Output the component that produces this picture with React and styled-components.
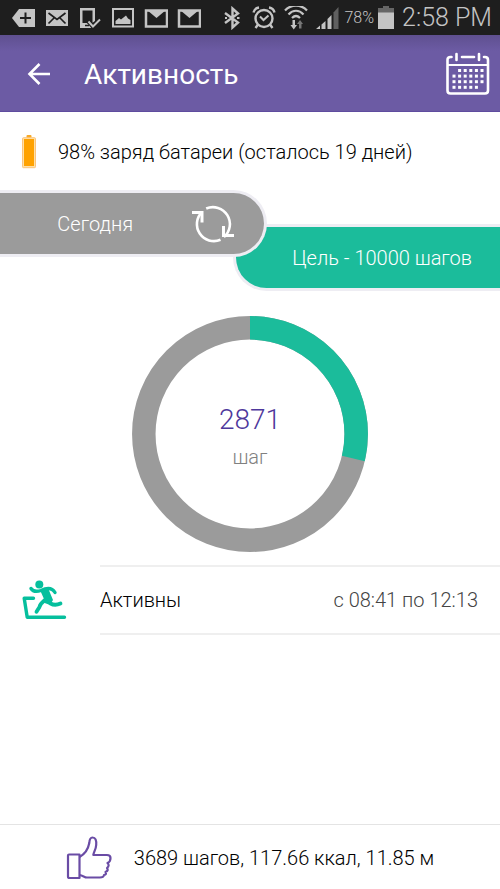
import React from "react";
import styled, { createGlobalStyle } from "styled-components";

const color = {
  purple: "#6c5ba4",
  deepPurple: "#5e4b9e",
  green: "#1bbc9b",
  gray: "#9b9b9b",
  edge: "#eeedf3",
  line: "#efefef",
};

const GlobalStyle = createGlobalStyle`
  *, *::before, *::after { box-sizing: border-box; }
  body {
    margin: 0;
    background: #fff;
    font-family: Roboto, "Liberation Sans", sans-serif;
    color: #111;
  }
`;

const Screen = styled.div`
  min-height: 100vh;
  display: flex;
  flex-direction: column;
  overflow-x: hidden;
`;

const StatusBar = styled.div`
  height: 35px;
  padding: 0 8px 0 12px;
  display: flex;
  align-items: center;
  justify-content: space-between;
  background: #1e1e1e;
  color: #c4c4c4;
`;

const StatusGroup = styled.div`
  display: flex;
  align-items: center;
  gap: ${(p) => p.$gap}px;
`;

const StatusIcon = styled.svg`
  display: block;
  flex: none;
  width: ${(p) => p.$width || 24}px;
  height: 24px;
`;

const Percent = styled.span`
  font-size: 16px;
  font-weight: 300;
  line-height: 24px;
`;

const Power = styled.div`
  display: flex;
  align-items: center;
  gap: 4px;
  margin-left: -4px;
`;

const Clock = styled.time`
  font-size: 25px;
  font-weight: 300;
  line-height: 32px;
`;

const AppBar = styled.header`
  min-height: 77px;
  padding: 2px 10px 0 24px;
  display: flex;
  align-items: center;
  background: linear-gradient(#5f5090, ${color.purple} 16px);
  border-bottom: 1px solid #5f4c9f;
  color: #fff;
`;

const Title = styled.h1`
  flex: 1;
  margin: 0 0 0 30px;
  padding-top: 2px;
  font-size: 28px;
  font-weight: 400;
  line-height: 36px;
`;

const IconButton = styled.button`
  display: block;
  padding: 0;
  border: 0;
  background: none;
  color: inherit;
  cursor: pointer;
  svg { display: block; }
`;

const BatteryLine = styled.div`
  min-height: 78px;
  padding: 2px 22px 0 21px;
  display: flex;
  align-items: center;
  gap: 21px;
  font-size: 20px;
  font-weight: 300;
  line-height: 24px;
  color: #000;
  svg { flex: none; }
`;

const Pills = styled.section`
  display: flex;
  flex-direction: column;
`;

const Pill = styled.div`
  width: calc(50% + 17px);
  min-height: 67px;
  display: flex;
  align-items: center;
  justify-content: flex-end;
  border: 3px solid ${color.edge};
  font-size: 20px;
  font-weight: 300;
  line-height: 24px;
  color: #fff;
`;

const TodayPill = styled(Pill)`
  z-index: 1;
  padding-right: 29px;
  gap: 58px;
  border-left: 0;
  border-radius: 0 34px 34px 0;
  background: ${color.gray};
`;

const GoalPill = styled(Pill)`
  align-self: flex-end;
  margin-top: -33px;
  padding-right: 28px;
  border-right: 0;
  border-radius: 34px 0 0 34px;
  background: ${color.green};
`;

const Gauge = styled.section`
  display: grid;
  place-items: center;
  margin-top: 25px;
  > * { grid-area: 1 / 1; }
`;

const Reading = styled.div`
  display: flex;
  flex-direction: column;
  align-items: center;
  gap: 9px;
  padding-top: 4px;
`;

const Steps = styled.strong`
  font-size: 28px;
  font-weight: 300;
  line-height: 32px;
  color: #4e389c;
`;

const Unit = styled.span`
  font-size: 20px;
  font-weight: 300;
  line-height: 24px;
  color: #808080;
`;

const ActivityRow = styled.section`
  display: grid;
  grid-template-columns: 100px 1fr;
  margin-top: 13px;
  font-size: 20px;
  font-weight: 300;
  line-height: 24px;
`;

const RowIcon = styled.div`
  display: flex;
  align-items: center;
  padding-left: 22px;
`;

const RowText = styled.div`
  min-height: 70px;
  padding-right: 22px;
  display: flex;
  align-items: center;
  justify-content: space-between;
  border: solid ${color.line};
  border-width: 2px 0;
  color: #000;
`;

const Period = styled.span`
  color: #444;
`;

const Summary = styled.footer`
  min-height: 65px;
  margin-top: auto;
  padding-top: 2px;
  display: flex;
  align-items: center;
  justify-content: center;
  gap: 22px;
  border-top: 1px solid #e4e4e4;
  font-size: 20px;
  font-weight: 300;
  line-height: 24px;
  color: #000;
  svg { flex: none; }
`;

function TagIcon() {
  return (
    <StatusIcon viewBox="0 0 24 24" aria-hidden="true">
      <path d="M7 3H23V21H7L0 12Z" fill="#c4c4c4" />
      <path d="M8 12H19M13.5 6.500V17.500" stroke="#1e1e1e" strokeWidth="2" />
    </StatusIcon>
  );
}

function EnvelopeIcon() {
  return (
    <StatusIcon viewBox="0 0 24 24" aria-hidden="true">
      <path d="M1 4H23V20H1Z" fill="#c4c4c4" />
      <path d="M3.500 7L12 13.500L20.500 7M3.500 17.500L9 12M20.500 17.500L15 12" fill="none" stroke="#1e1e1e" strokeWidth="1.700" />
    </StatusIcon>
  );
}

function PhoneCheckIcon() {
  return (
    <StatusIcon viewBox="0 0 24 24" aria-hidden="true">
      <path fillRule="evenodd" d="M2 2H17V15L13 18L16 22H2ZM4.500 4.500V17H14.500V4.500Z" fill="#c4c4c4" />
      <path d="M7 19.500H11" stroke="#1e1e1e" strokeWidth="1.500" />
      <path d="M10.500 15.500L15 20.500L22 13.500" fill="none" stroke="#1e1e1e" strokeWidth="4.500" />
      <path d="M10.500 15.500L15 20.500L22 13.500" fill="none" stroke="#c4c4c4" strokeWidth="2" />
    </StatusIcon>
  );
}

function PictureIcon() {
  return (
    <StatusIcon viewBox="0 0 24 24" aria-hidden="true">
      <path d="M2 3H22V20.500H2Z" fill="none" stroke="#c4c4c4" strokeWidth="2" />
      <path d="M4.500 18V15L8 12L10 13.500L15 9.500L17 12.500L19.500 14V18Z" fill="#c4c4c4" />
    </StatusIcon>
  );
}

function GmailIcon() {
  return (
    <StatusIcon viewBox="0 0 24 24" aria-hidden="true">
      <path d="M2 4.500H23V20.500H2Z" fill="none" stroke="#c4c4c4" strokeWidth="2.500" />
      <path d="M3 4H22L12.500 12Z" fill="#c4c4c4" />
    </StatusIcon>
  );
}

function BluetoothIcon() {
  return (
    <StatusIcon viewBox="0 0 24 24" aria-hidden="true">
      <path d="M5 7L18 16.500L12.500 21.500V2.500L18 7.500L5 17" fill="none" stroke="#c4c4c4" strokeWidth="2.400" />
      <path d="M5 12H7M17 12H19.500" stroke="#c4c4c4" strokeWidth="2" />
    </StatusIcon>
  );
}

function AlarmIcon() {
  return (
    <StatusIcon viewBox="0 0 24 24" aria-hidden="true">
      <g fill="none" stroke="#c4c4c4">
        <circle cx="12" cy="12.500" r="8.500" strokeWidth="2.400" />
        <path d="M8 10.500L11.500 14L16.500 9.500" strokeWidth="2" />
        <path d="M1.500 6.500C2 4 4 2 7 1.500M22.500 6.500C22 4 20 2 17 1.500" strokeWidth="2.400" />
        <path d="M6 18.500L3.500 22M18 18.500L20.500 22" strokeWidth="2.400" />
      </g>
    </StatusIcon>
  );
}

function WifiIcon() {
  return (
    <StatusIcon viewBox="0 0 24 24" aria-hidden="true">
      <g fill="none" stroke="#c4c4c4" strokeWidth="2.200">
        <path d="M1 4.500C7 -2 17 -2 23 4.500" />
        <path d="M4.500 8.500C9 3.500 15 3.500 19.500 8.500" />
        <path d="M8 12C10.500 9.500 13.500 9.500 16 12" />
      </g>
      <path d="M8.500 14H11V19H13L9.750 23.500L6.500 19H8.500Z" fill="#c4c4c4" />
      <path d="M15 22.500H17.500V18H19L16 14L13 18H15Z" fill="#777" />
    </StatusIcon>
  );
}

function SignalIcon() {
  return (
    <StatusIcon viewBox="0 0 24 24" aria-hidden="true">
      <path d="M0 23L4 19.500V23ZM5.500 18.500L9.500 15V23H5.500ZM11.500 13L15.500 9V23H11.500Z" fill="#c4c4c4" />
      <path d="M17.500 6.500L22.500 1V23H17.500Z" fill="#606060" />
    </StatusIcon>
  );
}

function PhoneBatteryIcon() {
  return (
    <StatusIcon $width={16} viewBox="0 0 16 24" aria-hidden="true">
      <path d="M5 0H11V2H16V8H0V2H5Z" fill="#666" />
      <path d="M0 6.500H16V23H0Z" fill="#c4c4c4" />
    </StatusIcon>
  );
}

function BackArrow() {
  return (
    <svg width="30" height="30" viewBox="0 0 30 30" aria-hidden="true">
      <path d="M26 15H6M15.500 5L5.500 15L15.500 25" fill="none" stroke="#fff" strokeWidth="2.600" />
    </svg>
  );
}

const calendarDots = [
  [1, 2, 3, 4, 5],
  [0, 1, 2, 3, 4, 5],
  [0, 1, 2, 3, 4, 5],
  [0, 1, 2, 3, 4],
];

function CalendarIcon() {
  return (
    <svg width="44" height="44" viewBox="0 0 44 44" aria-hidden="true">
      <g fill="none" stroke="#fff" strokeLinecap="round">
        <path d="M5.500 5H4.500Q1.500 5 1.500 8V38.500Q1.500 41.500 4.500 41.500H39Q42 41.500 42 38.500V8Q42 5 39 5H38" strokeWidth="2.600" />
        <path d="M16 5H28" strokeWidth="2.600" />
        <path d="M2 13H42" strokeWidth="2.200" />
        <path d="M10.500 2V8M33 2V8" strokeWidth="2.600" />
      </g>
      <g fill="#fff">
        {calendarDots.map((cells, row) =>
          cells.map((cell) => (
            <rect key={`${row}-${cell}`} x={6.5 + cell * 5.6} y={17 + row * 5.6} width="3" height="3" />
          ))
        )}
      </g>
    </svg>
  );
}

function ChargeIcon() {
  return (
    <svg width="16" height="34" viewBox="0 0 16 34" aria-hidden="true">
      <rect x="5.500" y="0" width="5" height="3" rx="1" fill="#f7a928" />
      <rect x="1.500" y="2.700" width="13" height="30" rx="1" fill="#ffe0a8" stroke="#fbc47c" />
      <rect x="3" y="4" width="10" height="27" fill="#ffa200" />
    </svg>
  );
}

function SyncIcon() {
  return (
    <svg width="44" height="40" viewBox="0 0 44 40" aria-hidden="true">
      <g fill="none" stroke="#fff" strokeWidth="2.600">
        <path d="M15.200 4.500A17 17 0 0 1 33 33" />
        <path d="M29.500 35.800A17 17 0 0 1 11 8" />
        <path d="M1 8.500H11V18.500" strokeWidth="3" />
        <path d="M32.500 22V31.500H43" strokeWidth="3" />
      </g>
    </svg>
  );
}

function Ring({ value, goal }) {
  const share = (value / goal) * 100;
  return (
    <svg width="236" height="236" viewBox="0 0 236 236" role="img" aria-label={`${value} / ${goal}`}>
      <g fill="none" strokeWidth="23.500" transform="rotate(-90 118 118)">
        <circle cx="118" cy="118" r="106.200" stroke={color.gray} />
        <circle cx="118" cy="118" r="106.200" stroke={color.green} pathLength="100" strokeDasharray={`${share} 100`} />
      </g>
    </svg>
  );
}

function RunnerIcon() {
  return (
    <svg width="46" height="40" viewBox="0 0 46 40" aria-hidden="true">
      <circle cx="17.300" cy="4.500" r="4" fill="#06bf9d" />
      <g fill="none" stroke="#06bf9d" strokeWidth="3.400" strokeLinecap="round" strokeLinejoin="round">
        <path d="M11.500 18.300H2.200L5.200 37.300H42.500" />
        <path d="M9 8.500C11.500 12.500 15 11.800 19 10.500C25 7.500 30 7.500 33 12.500" />
        <path d="M23 20C19.500 23 18 24 17.500 27L14.500 31.800" strokeWidth="3.800" />
        <path d="M24 19L28.500 23.500Q33 26 38.500 23.500" strokeWidth="3.800" />
      </g>
      <path d="M18 10L26 8L31 20L28 25L20 22L22 19Z" fill="#06bf9d" />
    </svg>
  );
}

function ThumbIcon() {
  return (
    <svg width="46" height="44" viewBox="0 0 46 44" aria-hidden="true">
      <g fill="none" stroke="#6a4ca5" strokeWidth="2.200" strokeLinejoin="round">
        <path d="M2 19.500Q2 18.500 3 18.500H13.500V42H3.500Q2 42 2 40.500Z" />
        <path d="M13.500 21C18 18.500 22 14 23.300 7C23.500 3 24.500 1.500 26.500 1.500C29.500 1.500 30.500 4 30.200 9C30 13 27.800 16 27.300 19H41Q44.500 19 44.500 22C44.500 24 44 26 41.500 27Q44 29.500 41 32Q43 34.500 39.500 36Q41 38.500 38 39C37.500 41 37 41.500 34 41.500H21C18.500 41.500 17 39.500 13.500 39" />
      </g>
    </svg>
  );
}

export default function App() {
  return (
    <Screen>
      <GlobalStyle />
      <StatusBar>
        <StatusGroup $gap={9}>
          <TagIcon />
          <EnvelopeIcon />
          <PhoneCheckIcon />
          <PictureIcon />
          <GmailIcon />
          <GmailIcon />
        </StatusGroup>
        <StatusGroup $gap={8}>
          <BluetoothIcon />
          <AlarmIcon />
          <WifiIcon />
          <SignalIcon />
          <Power>
            <Percent>78%</Percent>
            <PhoneBatteryIcon />
          </Power>
          <Clock>2:58 PM</Clock>
        </StatusGroup>
      </StatusBar>
      <AppBar>
        <IconButton type="button" aria-label="Назад">
          <BackArrow />
        </IconButton>
        <Title>Активность</Title>
        <IconButton type="button" aria-label="Календарь">
          <CalendarIcon />
        </IconButton>
      </AppBar>
      <main>
        <BatteryLine>
          <ChargeIcon />
          <span>98% заряд батареи (осталось 19 дней)</span>
        </BatteryLine>
        <Pills>
          <TodayPill>
            <span>Сегодня</span>
            <IconButton type="button" aria-label="Обновить">
              <SyncIcon />
            </IconButton>
          </TodayPill>
          <GoalPill>Цель - 10000 шагов</GoalPill>
        </Pills>
        <Gauge>
          <Ring value={2871} goal={10000} />
          <Reading>
            <Steps>2871</Steps>
            <Unit>шаг</Unit>
          </Reading>
        </Gauge>
        <ActivityRow>
          <RowIcon>
            <RunnerIcon />
          </RowIcon>
          <RowText>
            <span>Активны</span>
            <Period>с 08:41 по 12:13</Period>
          </RowText>
        </ActivityRow>
      </main>
      <Summary>
        <ThumbIcon />
        <span>3689 шагов, 117.66 ккал, 11.85 м</span>
      </Summary>
    </Screen>
  );
}
